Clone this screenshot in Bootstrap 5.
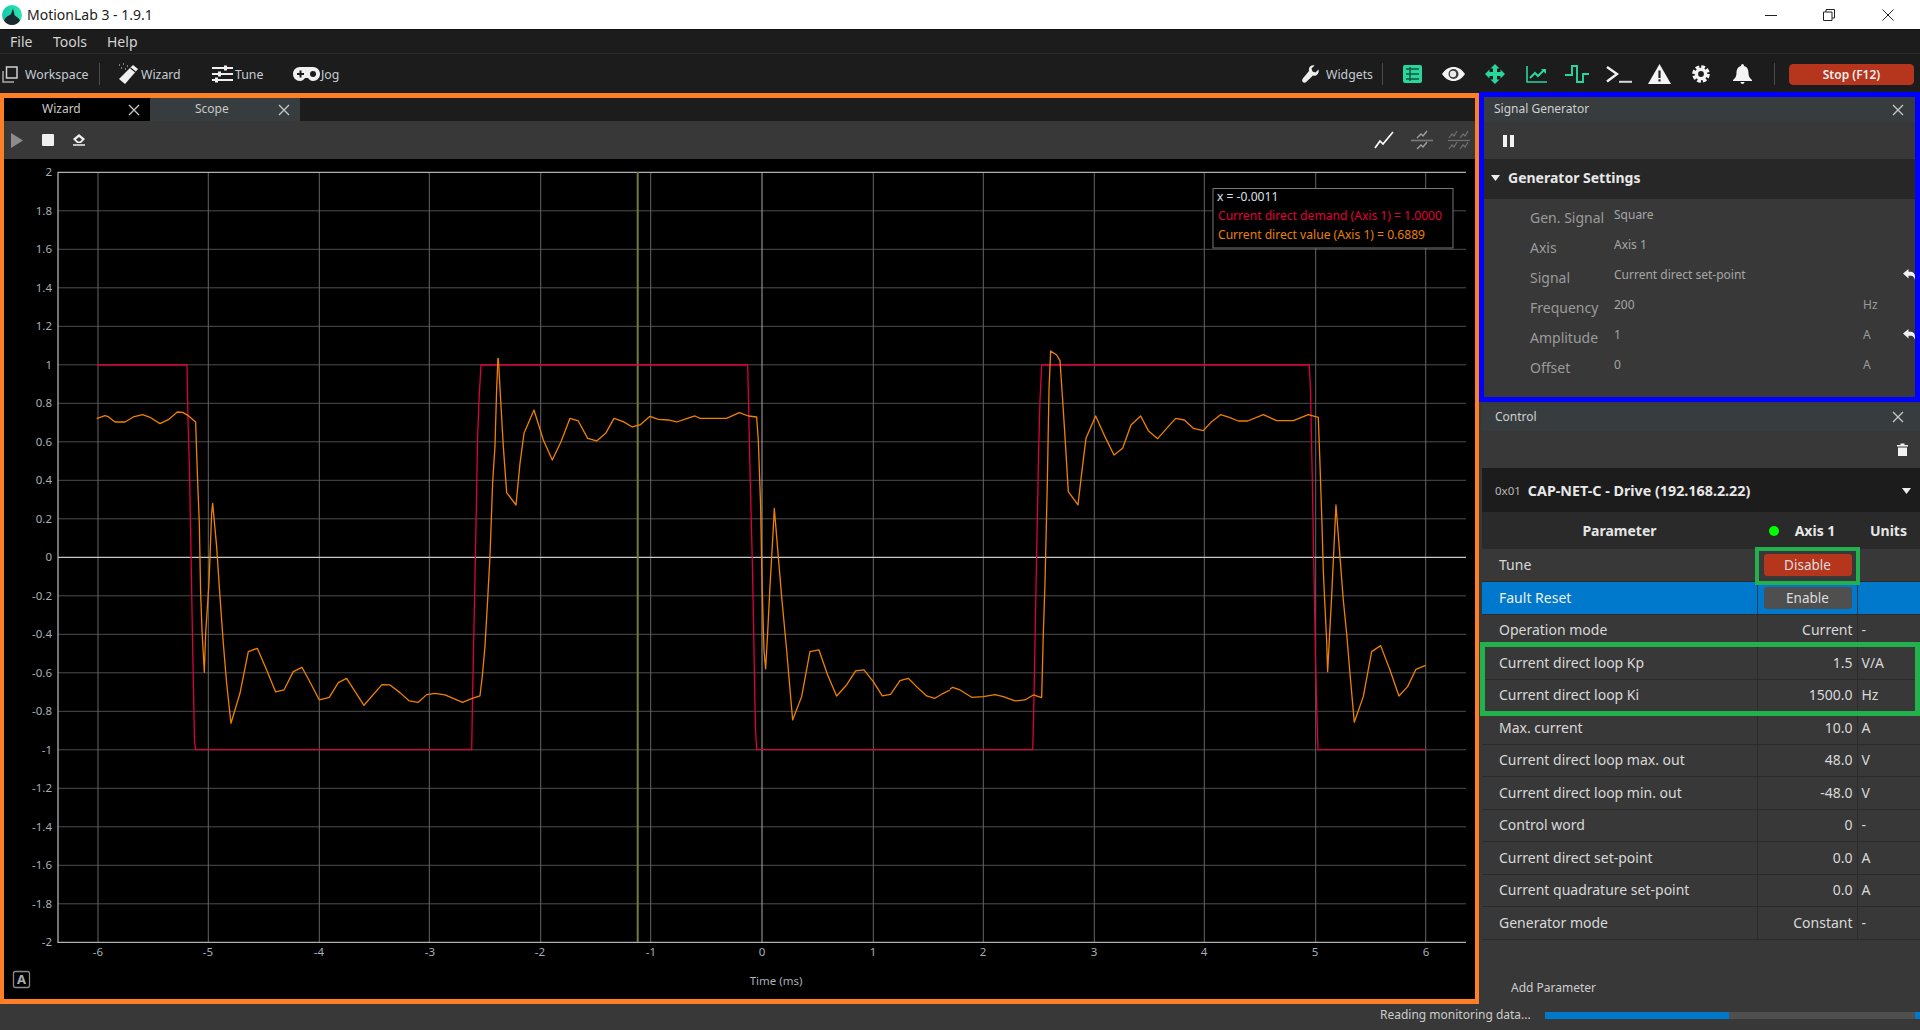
<!DOCTYPE html>
<html lang="en">
<head>
<meta charset="utf-8">
<title>MotionLab 3 - 1.9.1</title>
<link href="https://cdn.jsdelivr.net/npm/bootstrap@5.3.0/dist/css/bootstrap.min.css" rel="stylesheet">
<style>
html,body{height:1030px;overflow:hidden}
body{font-family:"Noto Sans","Open Sans",sans-serif;font-size:14px;background:#383838;color:#d8d8d8;line-height:1.2}
.app-root{width:1920px;height:1030px}
.win-title{height:29px;background:#fff;color:#222;font-size:14px;padding-left:2px}
.win-title .ttl{margin-left:5px;width:130px;padding-top:2px}
.win-btns{margin-left:auto}
.wb1{margin-right:46px}.wb2{margin-right:47px}.wb3{margin-right:26px}
.menu-strip{height:25px;background:#1c1c1c;border-top:1px solid #111;border-bottom:1px solid #292929;padding-left:10px;padding-top:2px;font-size:14px;color:#d4d4d4}
.menu-strip span{display:block}
.m1{width:43px}.m2{width:54px}
.tool-strip{height:39px;background:#1c1c1c;font-size:12.3px;color:#c4ccd4;padding-left:2px;padding-top:1px}
.tool-strip .txt{white-space:nowrap;padding-top:3px}
.x-ic{color:#c4c4c4}
.vsep{width:1px;height:22px;background:#4a4a4a}
.t-ws{width:64px;margin-left:7px}.s1{margin-left:10px}
.i-wiz{margin-left:17px}.t-wiz{width:40px;margin-left:2px}
.i-tune{margin-left:31px}.t-tune{width:30px;margin-left:2px}
.i-jog{margin-left:28px}.t-jog{width:24px;margin-left:1px}
.right-tools{margin-left:auto;margin-right:6px}
.t-wid{width:45px;margin-left:7px}
.g10{margin-left:11px}.g16{margin-left:16px}.g17{margin-left:17px}.g18{margin-left:18px}.g20{margin-left:20px}.g21{margin-left:21px}.g22{margin-left:22px}.g23{margin-left:23px}.g15{margin-left:14px}
.stop-btn{--bs-btn-padding-y:0;--bs-btn-padding-x:0;--bs-btn-font-size:12px;--bs-btn-font-weight:600;--bs-btn-bg:#b5351d;--bs-btn-border-color:#b5351d;--bs-btn-color:#eee;--bs-btn-border-radius:4px;width:125px;height:21px;line-height:19px}
.work-row{height:911px}
.scope-pane{width:1479px;height:911px;border:solid #ff7f27;border-width:5px 4px 5px 4px;background:#000}
.tab-strip{height:23px;background:#1c1c1c;font-size:12px;color:#c8c8c8}
.tab-a,.tab-b{width:146px;height:23px;position:relative}
.tab-b{width:150px;background:#373d3f}
.tab-a{background:#000}
.tab-a .nm{margin-left:38px;width:86px}
.tab-b .nm{margin-left:45px;width:83px}
.scope-bar{height:38px;background:#383838}
.scope-bar .l1{margin-left:7px}.scope-bar .l2{margin-left:19px}.scope-bar .l3{margin-left:19px}
.scope-bar .r1{margin-left:auto}.scope-bar .r2{margin-left:17px}.scope-bar .r3{margin-left:15px;margin-right:5px}
.plot-area{height:840px;background:#000;display:block}
.plot-area text{font-family:"Noto Sans",sans-serif;font-size:11.5px;fill:#a8b0b6}
.plot-area .leg{font-size:12.1px}
.side-col{width:441px;height:912px;margin-top:-1px;background:#383838}
.gen-pane{height:310px;border:5px solid #00f;background:#383838}
.pane-head{height:25px;background:#373d3f;font-size:12px;color:#cfcfcf;padding-left:10px;padding-right:11px}
.pane-head svg{margin-left:auto}
.gen-tools{height:37px;padding-left:19px}
.gen-band{height:40px;background:#272727;font-size:14px;font-weight:700;color:#e8e8e8;padding-left:7px;padding-bottom:2px}
.gen-band svg{margin-right:8px}
.gen-rows{padding-top:4px}
.gen-line{height:30px;color:#9b9b9b;font-size:14px;position:relative}
.gen-line .gl{margin-left:46px;width:84px;flex:none}
.gen-line .gv{font-size:12px;color:#a6a6a6;width:249px;flex:none;margin-top:-6px}
.gen-line .gu{font-size:12px;width:40px;flex:none;margin-top:-6px}
.gen-line svg{margin-top:-7px}
.ctl-pane{height:602px;position:relative;margin-left:3px;background:#383838}
.ctl-head{height:28px;padding-left:13px;padding-right:16px;margin-top:1px}
.ctl-tools{height:37px;padding-right:12px}
.dev-band{height:44px;background:#1c1c1c;padding-left:13px;padding-right:9px;padding-top:2px;font-size:14.3px;color:#e8e8e8;font-weight:700}
.dev-band small{font-size:11.5px;font-weight:400;color:#b8b8b8;margin-right:7px}
.dev-band svg{margin-left:auto}
.ctl-table{--bs-table-bg:#383838;--bs-table-color:#d8d8d8;--bs-table-border-color:#2b2b2b;table-layout:fixed;width:438px;margin:0;font-size:14px}
.ctl-table th,.ctl-table td{height:32.5px;padding:0 10px 0 17px;vertical-align:middle;border-bottom:1.5px solid #2b2b2b;white-space:nowrap;line-height:1}
.ctl-table td+td,.ctl-table th+th{border-left:1.5px solid #2b2b2b;padding:0 4px 0 4px}
.ctl-table thead th{height:37px;background:#2a2a2a;--bs-table-bg:#2a2a2a;font-weight:700;color:#e6e6e6;border:0!important;text-align:center;padding:0}
.ctl-table thead th.ax{padding-right:10px}
.ctl-table .v{text-align:right}
.ctl-table .sel td{--bs-table-bg:#0078cc;background:#0078cc;color:#eee;border-left-color:#223a4f}
.ctl-table .act{padding:0 8px 0 6px}
.rbtn{--bs-btn-padding-y:0;--bs-btn-padding-x:0;--bs-btn-font-size:13.5px;--bs-btn-border-radius:3px;--bs-btn-color:#ddd;--bs-btn-bg:#4f4f4f;--bs-btn-border-color:#4f4f4f;display:block;width:88px;height:22px;line-height:20px}
.rbtn-red{--bs-btn-bg:#b5351d;--bs-btn-border-color:#b5351d}
.ok-dot{display:inline-block;width:10px;height:10px;border-radius:50%;background:#0f0;margin-right:16px;margin-left:0}
.add-par{position:absolute;left:29px;top:578px;font-size:12px;color:#ccc}
.frame-g{position:absolute;border:4px solid #22b14c;pointer-events:none}
.fg1{left:273px;top:144px;width:105px;height:38px}
.fg2{left:-2px;top:239px;width:440px;height:74px;border-width:5px}
.status-row{height:26px;background:#383838;font-size:12px;color:#ccc}
.st-txt{margin-left:1380px;width:165px;flex:none;margin-top:-4px}
.prog-w{--bs-progress-height:7px;--bs-progress-bg:#4f4f4f;--bs-progress-border-radius:0;--bs-progress-bar-bg:#0078cc;width:375px;flex:none;margin-top:-3px}
</style>
</head>
<body>
<svg width="0" height="0" class="position-absolute">
 <symbol id="xx" viewBox="0 0 12 12"><path d="M1 1L11 11M11 1L1 11" stroke="currentColor" stroke-width="1.4" fill="none"/></symbol>
 <symbol id="back" viewBox="0 0 12 11"><path d="M0 4.500L5.500 0V2.800H8C10.500 2.800 12 5 12 8V11C11.500 8.500 10 6.800 8 6.800H5.500V9.500Z" fill="#f2f2f2"/></symbol>
 <symbol id="line3" viewBox="0 0 20 18"><path d="M1 17L6 10L9 13L19 1" stroke="currentColor" stroke-width="1.7" fill="none"/></symbol>
</svg>
<div class="app-root d-flex flex-column">

 <div class="win-title d-flex align-items-center">
  <svg width="20" height="20" viewBox="0 0 20 20"><defs><linearGradient id="lg" x1="0" y1="0" x2="1" y2="0"><stop offset="0" stop-color="#14c9ad"/><stop offset="1" stop-color="#2ee6b0"/></linearGradient></defs><circle cx="10" cy="10" r="10" fill="url(#lg)"/><path d="M2 15.500C4 11 7 11 9 9L11 3.500L12.500 10C14 12 17 12.500 18 15.500C16 18.500 13 20 10 20C7 20 4 18.500 2 15.500Z" fill="#1c2a30"/></svg>
  <span class="ttl">MotionLab 3 - 1.9.1</span>
  <div class="win-btns d-flex align-items-center">
   <svg class="wb1" width="12" height="12" viewBox="0 0 12 12"><path d="M0 6.500H12" stroke="#222" stroke-width="1"/></svg>
   <svg class="wb2" width="12" height="12" viewBox="0 0 12 12"><path d="M.5 3H9V11.500H.5ZM3 3V.5H11.500V9H9" stroke="#222" fill="none"/></svg>
   <svg class="wb3" width="12" height="12" viewBox="0 0 12 12"><path d="M.5 .5L11.500 11.500M11.500 .5L.5 11.500" stroke="#222" fill="none"/></svg>
  </div>
 </div>

 <div class="menu-strip d-flex align-items-center"><span class="m1">File</span><span class="m2">Tools</span><span>Help</span></div>

 <div class="tool-strip d-flex align-items-center">
  <svg width="16" height="17" viewBox="0 0 16 17"><path d="M4.500 1H15V12H4.500Z" stroke="#d0d0d0" stroke-width="1.500" fill="none"/><path d="M1 5V16H12" stroke="#a8a8a8" stroke-width="1.500" fill="none"/></svg>
  <span class="txt t-ws">Workspace</span><span class="vsep s1"></span>
  <svg class="i-wiz" width="22" height="22" viewBox="0 0 22 22"><path d="M16 2L21 6L8 21L2 16Z" fill="#f0f0f0"/><path d="M13.500 5L18.500 9" stroke="#1c1c1c" stroke-width="1.300"/><path d="M2 2h1M6 1h1M10 3h1M4 5h1M8 6h1" stroke="#ddd" stroke-width="1.200"/></svg>
  <span class="txt t-wiz">Wizard</span>
  <svg class="i-tune" width="21" height="18" viewBox="0 0 21 18"><path d="M0 3H21M0 9H21M0 15H21" stroke="#f0f0f0" stroke-width="1.800"/><rect x="12" y="0.500" width="3" height="5" fill="#f0f0f0"/><rect x="6" y="6.500" width="3" height="5" fill="#f0f0f0"/><rect x="3" y="12.500" width="3" height="5" fill="#f0f0f0"/></svg>
  <span class="txt t-tune">Tune</span>
  <svg class="i-jog" width="27" height="16" viewBox="0 0 27 16"><path d="M7 1H20C24 1 27 4 27 8C27 12 24 15 20 15C17.500 15 16 13 15 12H12C11 13 9.500 15 7 15C3 15 0 12 0 8C0 4 3 1 7 1Z" fill="#f0f0f0"/><path d="M4 8H11M7.500 4.500V11.500" stroke="#1c1c1c" stroke-width="2"/><circle cx="20" cy="8" r="3" fill="#1c1c1c"/></svg>
  <span class="txt t-jog">Jog</span>

  <div class="right-tools d-flex align-items-center">
   <svg width="17" height="18" viewBox="0 0 17 18"><path d="M16.500 4.500L13.500 7.500L10.500 6.500L9.500 3.500L12.500 .5C9.500 -.5 6 2 7 6L.8 13.500C-.2 15 0 16.500 1 17.200C2 18 3.500 17.800 4.500 16.800L11 10.500C14.500 11.500 17.500 8 16.500 4.500Z" fill="#eee"/></svg>
   <span class="txt t-wid">Widgets</span>
   <span class="vsep g10"></span>
   <svg class="g20" width="19" height="18" viewBox="0 0 19 18"><rect width="19" height="18" rx="2" fill="#29d79c"/><path d="M3 4H16M3 9H16M3 14H16M7 2V16" stroke="#17533f" stroke-width="1.400"/></svg>
   <svg class="g20" width="23" height="14" viewBox="0 0 23 14"><path d="M0 7C3 2.500 7 0 11.500 0C16 0 20 2.500 23 7C20 11.500 16 14 11.500 14C7 14 3 11.500 0 7Z" fill="#f4f4f4"/><circle cx="11.500" cy="7" r="5" fill="#3a3a3a"/><circle cx="11" cy="7" r="3.200" fill="#e8e8e8"/></svg>
   <svg class="g20" width="20" height="20" viewBox="0 0 20 20"><path d="M10 0L14.500 4.500H12V8H15.500V5.500L20 10L15.500 14.500V12H12V15.500H14.500L10 20L5.500 15.500H8V12H4.500V14.500L0 10L4.500 5.500V8H8V4.500H5.500Z" fill="#29d79c"/></svg>
   <svg class="g21" width="21" height="17" viewBox="0 0 21 17"><path d="M1 0V16H21" stroke="#29d79c" stroke-width="1.600" fill="none"/><path d="M4 12L9 7L12 10L18 4" stroke="#29d79c" stroke-width="2" fill="none"/><path d="M15 3H20V8Z" fill="#29d79c"/></svg>
   <svg class="g18" width="24" height="18" viewBox="0 0 24 18"><path d="M0 10H7V1H12V17H18V9H24" stroke="#29d79c" stroke-width="1.900" fill="none"/></svg>
   <svg class="g17" width="26" height="17" viewBox="0 0 26 17"><path d="M1 1L11 8L1 15.500" stroke="#f2f2f2" stroke-width="2.400" fill="none"/><path d="M13 15.800H26" stroke="#d8d8d8" stroke-width="2"/></svg>
   <svg class="g16" width="23" height="20" viewBox="0 0 23 20"><path d="M11.500 0L23 20H0Z" fill="#f4f4f4"/><path d="M11.500 6.500V14" stroke="#222" stroke-width="2.200"/><path d="M11.500 15.300V17.500" stroke="#222" stroke-width="2.200"/></svg>
   <svg class="g21" width="18" height="18" viewBox="0 0 18 18"><circle cx="9" cy="9" r="7.100" fill="none" stroke="#f4f4f4" stroke-width="3.400" stroke-dasharray="3.700 1.880"/><circle cx="9" cy="9" r="4.600" fill="none" stroke="#f4f4f4" stroke-width="3.400"/></svg>
   <svg class="g23" width="19" height="20" viewBox="0 0 19 20"><path d="M9.500 0C10.500 0 11 1 11 2C14.500 3 15.500 6 15.500 9C15.500 12 16.500 14 19 16V17H0V16C2.500 14 3.500 12 3.500 9C3.500 6 4.500 3 8 2C8 1 8.500 0 9.500 0Z" fill="#f4f4f4"/><path d="M7.500 18H11.500C11.500 19.300 10.500 20 9.500 20C8.500 20 7.500 19.300 7.500 18Z" fill="#f4f4f4"/></svg>
   <span class="vsep g22"></span>
   <button class="btn stop-btn g15" type="button">Stop (F12)</button>
  </div>
 </div>

 <div class="work-row d-flex">
  <div class="scope-pane d-flex flex-column">
   <div class="tab-strip d-flex">
    <div class="tab-a d-flex align-items-center"><span class="nm">Wizard</span><svg width="12" height="12" class="x-ic"><use href="#xx"/></svg></div>
    <div class="tab-b d-flex align-items-center"><span class="nm">Scope</span><svg width="12" height="12" class="x-ic"><use href="#xx"/></svg></div>
   </div>
   <div class="scope-bar d-flex align-items-center">
    <svg class="l1" width="12" height="15" viewBox="0 0 12 15"><path d="M0 0L12 7.500L0 15Z" fill="#8c8c8c"/></svg>
    <svg class="l2" width="12" height="12" viewBox="0 0 12 12"><rect width="12" height="12" rx="1" fill="#f0f0f0"/></svg>
    <svg class="l3" width="12" height="12" viewBox="0 0 12 12"><path d="M6 0L12 5L8 9H4L0 5Z" fill="#f0f0f0"/><path d="M0 11H12" stroke="#f0f0f0" stroke-width="1.500"/><path d="M3 5.500L6 3L9 5.500L7 7.500H5Z" fill="#383838"/></svg>
    <svg class="r1 text-white" width="20" height="18"><use href="#line3"/></svg>
    <svg class="r2" width="22" height="20" viewBox="0 0 22 20"><g stroke="#a0a0a0" fill="none" stroke-width="1.300"><path d="M6 8L10 4L12 6L16 1"/><path d="M6 19L10 15L12 17L16 12"/><path d="M0 10.500H22" stroke-width="1.700" stroke="#777"/></g></svg>
    <svg class="r3" width="22" height="20" viewBox="0 0 22 20"><g stroke="#707070" fill="none" stroke-width="1.200"><path d="M1 8L4 4L6 6L9 1M12 8L15 4L17 6L20 1"/><path d="M1 19L4 15L6 17L9 12M12 19L15 15L17 17L20 12"/><path d="M0 10.500H22"/></g></svg>
   </div>
   <svg class="plot-area" width="1471" height="840" viewBox="4 159 1471 840">
    <g stroke="#4e4e4e" stroke-width="1">
     <path d="M58 210.800H1466M58 249.300H1466M58 287.800H1466M58 326.300H1466M58 364.800H1466M58 403.300H1466M58 441.800H1466M58 480.300H1466M58 518.800H1466M58 595.800H1466M58 634.300H1466M58 672.800H1466M58 711.300H1466M58 749.800H1466M58 788.300H1466M58 826.800H1466M58 865.300H1466M58 903.800H1466"/>
     <path stroke="#666" d="M98 172V942M208.300 172V942M319.300 172V942M429.300 172V942M540.700 172V942M650.700 172V942M873.300 172V942M983.300 172V942M1094.300 172V942M1204.300 172V942M1315.700 172V942M1425.700 172V942"/>
    </g>
    <path d="M762 172V942" stroke="#a8a8a8" stroke-width="1"/>
    <path d="M58 557.300H1466" stroke="#c8c8c8" stroke-width="1.200"/>
    <path d="M1466 172.300H58V942.300H1466" stroke="#b0b0b0" stroke-width="1.300" fill="none"/>
    <path d="M637.700 172V942" stroke="#737a40" stroke-width="2"/>

    <path fill="none" stroke="#dc0040" stroke-width="1.300" d="M97 365H187L188 420L189.500 470L190.500 525L191.500 580L192.500 640L193.500 690L194.500 740L195.500 749.700H471.700L472.500 700L473.500 650L474.500 600L475.500 550L476.500 500L477.500 440L479 400L481 365H747.700L748.500 400L750 470L751.500 530L752.500 570L753.500 620L754.500 680L755.500 730L756.700 749.700H1032.700L1033.500 720L1034.500 670L1035.500 615L1036.500 560L1037.500 510L1038.500 455L1040 400L1041.700 365H1309.300L1310.500 390L1311.500 440L1312.500 490L1313.500 550L1314.500 600L1315.500 660L1316.500 700L1318 749.700H1425.700"/>

    <g fill="none" stroke="#f08000" stroke-width="1.300" stroke-linejoin="round">
     <polyline vector-effect="non-scaling-stroke" transform="translate(0 340) scale(.3333)" points="290,236 315,227 325,230 345,246 375,246 400,231 428,224 450,232 480,251 505,239 532,216 548,217 565,227 587,246 590,340 594,450 598,550 602,760 606,870 613,997 617,880 627,730 635,520 638,490 650,620 660,770 670,910 680,1030 693,1150 720,1060 745,935 772,925 800,990 827,1056 852,1050 880,995 906,982 932,1030 958,1080 988,1072 1015,1028 1040,1015 1092,1096 1146,1034 1170,1035 1200,1058 1228,1083 1255,1087 1280,1064 1305,1060 1335,1065 1388,1087 1415,1076 1440,1068 1448,1000 1455,920 1462,800 1470,650 1478,430 1485,320 1490,150 1494,55"/>
     <polyline vector-effect="non-scaling-stroke" transform="translate(450 340) scale(.3333)" points="145,55 152,180 160,320 170,458 198,495 210,370 222,280 252,210 280,300 307,360 333,305 360,235 385,243 413,295 440,303 467,280 492,235 520,245 547,261 570,255 600,229 625,238 655,240 680,246 710,236 735,228 750,235 830,235 868,218 895,228 920,231 925,300 932,500 936,720 942,930 947,987 953,880 960,740 968,600 973,505 985,650 995,770 1010,930 1028,1140 1055,1070 1080,935 1107,930 1133,1005 1160,1068 1190,1035 1217,993 1242,990 1270,1025 1297,1068 1322,1063 1350,1022 1375,1015 1400,1040 1430,1068 1455,1075 1480,1060 1500,1050"/>
     <polyline vector-effect="non-scaling-stroke" transform="translate(950 340) scale(.3333)" points="0,1048 8,1042 30,1050 65,1072 100,1070 135,1064 160,1070 195,1083 225,1080 250,1065 275,1073 280,880 285,730 292,430 297,150 302,33 320,45 330,62 338,180 345,290 355,455 384,495 395,400 408,295 437,228 465,290 492,345 518,325 543,255 572,228 595,272 623,296 650,265 677,235 703,240 730,265 760,272 785,245 812,224 838,232 865,243 893,243 940,224 980,242 1030,242 1075,224 1105,232 1110,370 1116,550 1120,690 1125,800 1130,900 1133,995 1145,770 1158,495 1170,650 1180,780 1190,880 1200,1000 1213,1147 1240,1070 1265,935 1292,917 1320,990 1347,1068 1373,1040 1398,988 1427,976"/>
    </g>

    <g text-anchor="end">
     <text x="52" y="176">2</text><text x="52" y="215">1.8</text><text x="52" y="253">1.6</text><text x="52" y="292">1.4</text><text x="52" y="330">1.2</text><text x="52" y="369">1</text><text x="52" y="407">0.8</text><text x="52" y="446">0.6</text><text x="52" y="484">0.4</text><text x="52" y="523">0.2</text><text x="52" y="561">0</text><text x="52" y="600">-0.2</text><text x="52" y="638">-0.4</text><text x="52" y="677">-0.6</text><text x="52" y="715">-0.8</text><text x="52" y="754">-1</text><text x="52" y="792">-1.2</text><text x="52" y="831">-1.4</text><text x="52" y="869">-1.6</text><text x="52" y="908">-1.8</text><text x="52" y="946">-2</text>
    </g>
    <g text-anchor="middle">
     <text x="98" y="956">-6</text><text x="208" y="956">-5</text><text x="319" y="956">-4</text><text x="430" y="956">-3</text><text x="540" y="956">-2</text><text x="651" y="956">-1</text><text x="762" y="956">0</text><text x="873" y="956">1</text><text x="983" y="956">2</text><text x="1094" y="956">3</text><text x="1204" y="956">4</text><text x="1315" y="956">5</text><text x="1426" y="956">6</text>
     <text x="776" y="985">Time (ms)</text>
     <text x="21.500" y="984" style="font-weight:700;font-size:13px">A</text>
    </g>
    <rect x="13.500" y="971.500" width="16" height="16" rx="2" fill="none" stroke="#8a8a8a" stroke-width="1.300"/>

    <rect x="1213" y="188.500" width="240" height="59.500" fill="#000" stroke="#777" stroke-width="1"/>
    <text class="leg" x="1217" y="201" style="fill:#d8e0e8">x = -0.0011</text>
    <text class="leg" x="1218" y="220" style="fill:#e0003c">Current direct demand (Axis 1) = 1.0000</text>
    <text class="leg" x="1218" y="239" style="fill:#e88000">Current direct value (Axis 1) = 0.6889</text>
   </svg>
  </div>

  <div class="side-col">
   <div class="gen-pane d-flex flex-column">
    <div class="pane-head d-flex align-items-center"><span>Signal Generator</span><svg width="12" height="12" class="x-ic"><use href="#xx"/></svg></div>
    <div class="gen-tools d-flex align-items-center"><svg width="11" height="12" viewBox="0 0 11 12"><path d="M0 0H4V12H0ZM7 0H11V12H7Z" fill="#f2f2f2"/></svg></div>
    <div class="gen-band d-flex align-items-center"><svg width="9" height="6" viewBox="0 0 9 6"><path d="M0 0H9L4.500 6Z" fill="#eee"/></svg>Generator Settings</div>
    <div class="gen-rows">
     <div class="gen-line d-flex align-items-center"><span class="gl">Gen. Signal</span><span class="gv">Square</span></div>
     <div class="gen-line d-flex align-items-center"><span class="gl">Axis</span><span class="gv">Axis 1</span></div>
     <div class="gen-line d-flex align-items-center"><span class="gl">Signal</span><span class="gv">Current direct set-point</span><span class="gu"></span><svg width="12" height="11"><use href="#back"/></svg></div>
     <div class="gen-line d-flex align-items-center"><span class="gl">Frequency</span><span class="gv">200</span><span class="gu">Hz</span></div>
     <div class="gen-line d-flex align-items-center"><span class="gl">Amplitude</span><span class="gv">1</span><span class="gu">A</span><svg width="12" height="11"><use href="#back"/></svg></div>
     <div class="gen-line d-flex align-items-center"><span class="gl">Offset</span><span class="gv">0</span><span class="gu">A</span></div>
    </div>
   </div>

   <div class="ctl-pane">
    <div class="pane-head ctl-head d-flex align-items-center"><span>Control</span><svg width="12" height="12" class="x-ic"><use href="#xx"/></svg></div>
    <div class="ctl-tools d-flex align-items-center justify-content-end"><svg width="11" height="13" viewBox="0 0 11 13"><path d="M0 2H3.500V.5H7.500V2H11V3.500H0ZM1 4.500H10V13H1Z" fill="#f2f2f2"/></svg></div>
    <div class="dev-band d-flex align-items-center"><small>0x01</small><span>CAP-NET-C - Drive (192.168.2.22)</span><svg width="9" height="6" viewBox="0 0 9 6"><path d="M0 0H9L4.500 6Z" fill="#eee"/></svg></div>
    <table class="table ctl-table">
     <colgroup><col style="width:275px"><col style="width:100px"><col style="width:63px"></colgroup>
     <thead><tr><th>Parameter</th><th class="ax"><span class="ok-dot"></span>Axis 1</th><th>Units</th></tr></thead>
     <tbody>
      <tr><td>Tune</td><td class="act"><button class="btn rbtn rbtn-red" type="button">Disable</button></td><td></td></tr>
      <tr class="sel"><td>Fault Reset</td><td class="act"><button class="btn rbtn" type="button">Enable</button></td><td></td></tr>
      <tr><td>Operation mode</td><td class="v">Current</td><td>-</td></tr>
      <tr><td>Current direct loop Kp</td><td class="v">1.5</td><td>V/A</td></tr>
      <tr><td>Current direct loop Ki</td><td class="v">1500.0</td><td>Hz</td></tr>
      <tr><td>Max. current</td><td class="v">10.0</td><td>A</td></tr>
      <tr><td>Current direct loop max. out</td><td class="v">48.0</td><td>V</td></tr>
      <tr><td>Current direct loop min. out</td><td class="v">-48.0</td><td>V</td></tr>
      <tr><td>Control word</td><td class="v">0</td><td>-</td></tr>
      <tr><td>Current direct set-point</td><td class="v">0.0</td><td>A</td></tr>
      <tr><td>Current quadrature set-point</td><td class="v">0.0</td><td>A</td></tr>
      <tr><td>Generator mode</td><td class="v">Constant</td><td>-</td></tr>
     </tbody>
    </table>
    <span class="add-par">Add Parameter</span>
    <div class="frame-g fg1"></div>
    <div class="frame-g fg2"></div>
   </div>
  </div>
 </div>

 <div class="status-row d-flex align-items-center">
  <span class="st-txt">Reading monitoring data...</span>
  <div class="progress prog-w"><div class="progress-bar" style="width:49%"></div><div class="progress-bar ms-auto" style="width:5px"></div></div>
 </div>
</div>
<script src="https://cdn.jsdelivr.net/npm/bootstrap@5.3.0/dist/js/bootstrap.bundle.min.js"></script>
</body>
</html>
